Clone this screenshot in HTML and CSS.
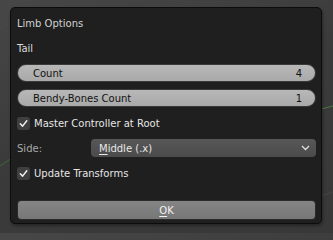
FILE: index.html
```html
<!DOCTYPE html>
<html>
<head>
<meta charset="utf-8">
<link rel="stylesheet" href="styles.css">
</head>
<body>
<svg class="viewport" width="333" height="233" viewBox="0 0 333 233">
  <path d="M0 28 L60 5" stroke="#4a4a4a" stroke-width="1" fill="none"/>
  <path d="M0 166 L12 158" stroke="#3e6a34" stroke-width="1" fill="none"/>
  <path d="M321 109 L333 106" stroke="#4b7a3e" stroke-width="1" fill="none"/>
  <path d="M321 196 L333 192" stroke="#464646" stroke-width="1" fill="none"/>
</svg>
<div class="popup">
  <div class="row label title">Limb Options</div>
  <div class="row label">Tail</div>
  <div class="row field"><span>Count</span><span>4</span></div>
  <div class="row field"><span>Bendy-Bones Count</span><span>1</span></div>
  <div class="row check">
    <span class="box"><svg width="9" height="9" viewBox="0 0 9 9"><path d="M1.3 4.8 L3.6 7.1 L7.8 1.8" stroke="#f0f0f0" stroke-width="1.5" fill="none" stroke-linecap="round" stroke-linejoin="round"/></svg></span>
    <span>Master Controller at Root</span>
  </div>
  <div class="row side">
    <span class="side-label">Side:</span>
    <div class="dropdown">
      <span><span class="ul">M</span>iddle (.x)</span>
      <svg width="9" height="6" viewBox="0 0 9 6"><path d="M1 1 L4.5 4.5 L8 1" stroke="#e0e0e0" stroke-width="1.3" fill="none"/></svg>
    </div>
  </div>
  <div class="row check">
    <span class="box"><svg width="9" height="9" viewBox="0 0 9 9"><path d="M1.3 4.8 L3.6 7.1 L7.8 1.8" stroke="#f0f0f0" stroke-width="1.5" fill="none" stroke-linecap="round" stroke-linejoin="round"/></svg></span>
    <span>Update Transforms</span>
  </div>
  <div class="ok"><span><span class="ul">O</span>K</span></div>
</div>
</body>
</html>
```
FILE: styles.css
```css
html, body {
  margin: 0;
  padding: 0;
}
body {
  width: 333px;
  height: 233px;
  overflow: hidden;
  position: relative;
  background: linear-gradient(160deg, #474747 0%, #3b3b3b 45%, #383838 100%);
  font-family: "DejaVu Sans", sans-serif;
  font-size: 10px;
  color: #e6e6e6;
}
.viewport {
  position: absolute;
  left: 0;
  top: 0;
}
.popup {
  position: absolute;
  left: 10px;
  top: 7px;
  width: 299px;
  height: 206px;
  padding: 6px 5px 3px 6px;
  background: #1f1f1f;
  border: 1px solid #0c0c0c;
  border-radius: 5px;
  box-shadow: 1px 2px 3px rgba(0,0,0,0.35);
  display: flex;
  flex-direction: column;
  gap: 7px;
}
.row {
  height: 18px;
  display: flex;
  align-items: center;
  flex-shrink: 0;
}
.label {
  color: #dcdcdc;
}
.title {
  color: #d2d2d2;
}
.field {
  justify-content: space-between;
  box-sizing: border-box;
  padding: 0 13px 0 15px;
  border-radius: 9px;
  background: linear-gradient(#b8b8b8, #a9a9a9);
  border: 1px solid #3a3a3a;
  color: #111;
}
.check {
  gap: 4px;
}
.box {
  width: 13px;
  height: 13px;
  box-sizing: border-box;
  border-radius: 3px;
  background: #3f3f3f;
  display: flex;
  align-items: center;
  justify-content: center;
}
.side {
  gap: 0;
}
.side-label {
  width: 74px;
  color: #a8a8a8;
}
.dropdown {
  flex: 1;
  height: 18px;
  box-sizing: border-box;
  border-radius: 4px;
  background: linear-gradient(#575757, #4b4b4b);
  display: flex;
  align-items: center;
  justify-content: space-between;
  padding: 0 6px 0 8px;
  color: #e8e8e8;
}
.ul {
  text-decoration: underline;
  text-underline-offset: 2px;
}
.ok {
  margin-top: 11px;
  height: 20px;
  box-sizing: border-box;
  border-radius: 4px;
  background: linear-gradient(#858585, #777777);
  border: 1px solid #2a2a2a;
  display: flex;
  align-items: center;
  justify-content: center;
  color: #f2f2f2;
  flex-shrink: 0;
}
```
